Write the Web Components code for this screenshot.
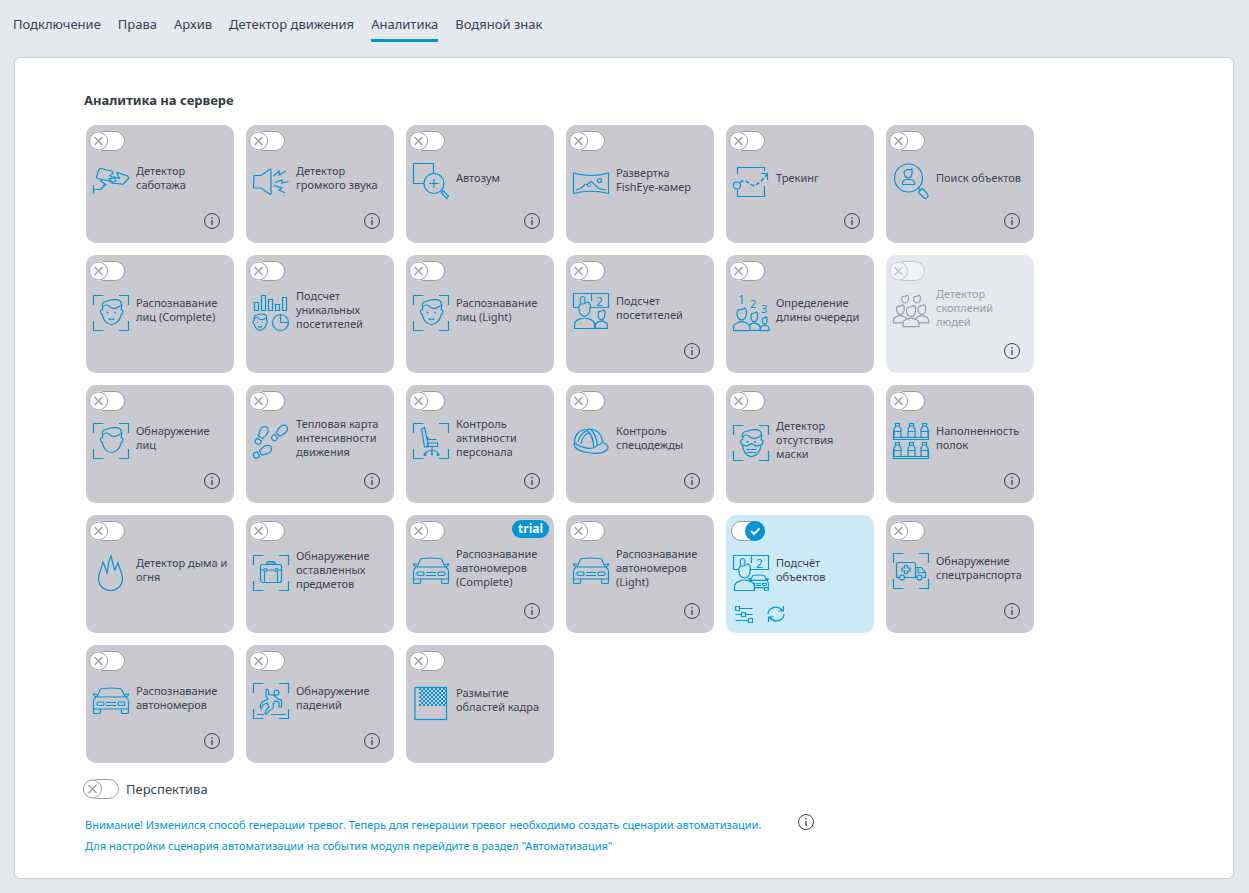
<!DOCTYPE html>
<html lang="ru">
<head>
<meta charset="utf-8">
<title>Аналитика</title>
<style>
  body {
    margin: 0;
    background: #e5e8ed;
    color: #3b4252;
    font-family: "Noto Sans", "Open Sans", sans-serif;
    --blue: #0095d4;
  }
</style>
</head>
<body>
<settings-page>
  <tab-link slot="tabs">Подключение</tab-link>
  <tab-link slot="tabs">Права</tab-link>
  <tab-link slot="tabs">Архив</tab-link>
  <tab-link slot="tabs">Детектор движения</tab-link>
  <tab-link slot="tabs" active>Аналитика</tab-link>
  <tab-link slot="tabs">Водяной знак</tab-link>

  <card-grid heading="Аналитика на сервере">
    <analytics-card icon="tamper" info>Детектор саботажа</analytics-card>
    <analytics-card icon="sound" info>Детектор громкого звука</analytics-card>
    <analytics-card icon="autozoom" info>Автозум</analytics-card>
    <analytics-card icon="fisheye">Развертка FishEye-камер</analytics-card>
    <analytics-card icon="tracking" info>Трекинг</analytics-card>
    <analytics-card icon="search" info>Поиск объектов</analytics-card>

    <analytics-card icon="face">Распознавание лиц (Complete)</analytics-card>
    <analytics-card icon="unique">Подсчет уникальных посетителей</analytics-card>
    <analytics-card icon="face">Распознавание лиц (Light)</analytics-card>
    <analytics-card icon="visitors" info>Подсчет посетителей</analytics-card>
    <analytics-card icon="queue">Определение длины очереди</analytics-card>
    <analytics-card icon="crowd" info disabled>Детектор скоплений людей</analytics-card>

    <analytics-card icon="head" info>Обнаружение лиц</analytics-card>
    <analytics-card icon="steps" info>Тепловая карта интенсивности движения</analytics-card>
    <analytics-card icon="chair" info>Контроль активности персонала</analytics-card>
    <analytics-card icon="helmet" info>Контроль спецодежды</analytics-card>
    <analytics-card icon="mask">Детектор отсутствия маски</analytics-card>
    <analytics-card icon="shelves" info>Наполненность полок</analytics-card>

    <analytics-card icon="fire">Детектор дыма и огня</analytics-card>
    <analytics-card icon="luggage">Обнаружение оставленных предметов</analytics-card>
    <analytics-card icon="car" info badge="trial">Распознавание автономеров (Complete)</analytics-card>
    <analytics-card icon="car" info>Распознавание автономеров (Light)</analytics-card>
    <analytics-card icon="objects" active>Подсчёт объектов</analytics-card>
    <analytics-card icon="ambulance" info>Обнаружение спецтранспорта</analytics-card>

    <analytics-card icon="car" info>Распознавание автономеров</analytics-card>
    <analytics-card icon="fall" info>Обнаружение падений</analytics-card>
    <analytics-card icon="blur">Размытие областей кадра</analytics-card>
  </card-grid>

  <perspective-row>Перспектива</perspective-row>
  <notice-text>
    <span>Внимание! Изменился способ генерации тревог. Теперь для генерации тревог необходимо создать сценарии автоматизации.</span>
    <span slot="second">Для настройки сценария автоматизации на события модуля перейдите в раздел "Автоматизация"</span>
  </notice-text>
</settings-page>

<script>
const frame = '<path d="M.5 10V.5H10.5M26 .5H35.5V10M.5 26V35.5H10.5M26 35.5H35.5V26"/>';
const hair = '<path d="M9.500 15V12.500C8.500 9 10.500 6.500 13.500 6.500C17 4.500 24 4 26.500 5.500C29.500 7.500 29 11 28 15M9.500 12.500C12 9 15 9.500 17 12C20 14.500 26 13.500 28.500 9.500"/>';
const jaw = '<path d="M9.500 15C7 14.500 7 18.500 9.500 20C10 25.500 14.500 29.500 18.500 29.500S27.500 25.500 28 20C30.500 18.500 30.500 14.500 28 15"/>';
const smile = '<path d="M15.500 23.500Q18.500 26 21.500 23.500"/><circle class="solid" cx="14.500" cy="17.500" r="1"/><circle class="solid" cx="22" cy="17.500" r="1"/>';
const carBody = '<path d="M4 14L7 7Q7.500 5.500 10 5.500Q18 4.500 26 5.500Q28.500 5.500 29 7L32 14M4 11.500L.5 11Q.5 13 3 14M32 11.500L35.500 11Q35.500 13 33 14M3 14H33Q35.500 16 35.500 19V26H.5V19Q.5 16 3 14M.5 26V29.500Q.5 30.500 1.500 30.500H6.500Q7.500 30.500 7.500 29.500V26M28.500 26V29.500Q28.500 30.500 29.500 30.500H34.500Q35.500 30.500 35.500 29.500V26M13 19.500H23M13 22.500H23"/><rect x="4" y="19" width="7" height="3.500" rx="1.500"/><rect x="25" y="19" width="7" height="3.500" rx="1.500"/>';
const headPath = 'M4.500 8C3.500 4 5.500 2.500 8 2.500C11 2.500 12 1.500 13.500 .5C15.500 1.500 16.500 4 15.500 8C15.500 11.500 13 14.500 10 14.500S4.500 11.500 4.500 8Z';
const shape = (d, x, y, sx, sy) => `<path class="cut" vector-effect="non-scaling-stroke" transform="translate(${x} ${y}) scale(${sx} ${sy})" d="${d}"/>`;
const person = (x, y, sx, sy) => shape(headPath + 'M0 27V23C0 18.500 4 18 7 17Q10 16 13 17C16 18 20 18.500 20 23V27Z', x, y, sx, sy);
const bottle = (x, y) => `<path d="M${x + 2} ${y}H${x + 6}V${y + 2.5}H${x + 2}ZM${x + 2.5} ${y + 2.5}L${x + .5} ${y + 5.5}V${y + 14}H${x + 7.5}V${y + 5.5}L${x + 5.5} ${y + 2.5}M${x + .5} ${y + 8}H${x + 7.5}"/>`;
const step = (x, y, turn) => `<g transform="translate(${x} ${y}) rotate(${turn})"><path d="M-2.500 5C-3 2 -4 1 -4 -2C-4 -5 -2 -7 0 -7S4 -5 4 -2C4 1 3 2 2.500 5Z"/><path d="M-2.500 7.500H2.500Q4 12.500 0 12.500T-2.500 7.500Z"/></g>`;
const board = '<path d="M.5 .5H35.500V14.500H.5ZM18.500 .5V8"/><text x="6" y="12" font-size="12">0</text><text x="23" y="13" font-size="12">2</text>';
let checker = '';
for (let r = 0; r < 9; r++)
  for (let c = 0; c < 14; c++)
    if ((r + c) % 2 === 0) checker += `M${6 + c * 2} ${3 + r * 2}h2v2h-2z`;

const ICONS = {
  tamper: '<path d="M8 5.500L18.500 8Q20 8.500 20 10.500L17 12.500L20 15L16 16L18.500 18.500L4.500 15.500Q3 15 3.500 13.500L6 6.500Q6.500 5 8 5.500ZM24 9.500L34.500 13Q36 14 35.500 15.500L31 20.500Q30 21.500 28 21L18.500 20L23 18L21 14L26.500 15.500ZM.5 22V31M.5 26.500H6Q9 26.500 10 24L13 21.500L8 18.500V17M13 22H10"/>',
  sound: '<path d="M1 13Q1 12.500 1.500 12.500H8L16.500 6.500Q18 6 18 7V30.500Q18 32 16.500 31L8 25H1.500Q.5 25 .5 24.500ZM20.500 13L26 8V12L33 8M22 19.500L29 17V20L35.500 18.500M20.500 22.500L29 25L26 27L32 30"/>',
  autozoom: '<path d="M11 20.500H.5V.5H20.500V10.500M21 16V25M16.500 20.500H25.500"/><circle cx="21" cy="20.500" r="10"/><path d="M28 27L30 29M28.500 30L30.500 28L35.500 33L33.500 35.500Z"/>',
  fisheye: '<path d="M.5 8Q18 13 35.500 8V28.500Q18 24 .5 28.500ZM3 25C8 24 9 23 11 20.500Q12 18.500 14 19.500L17 17.500Q18.500 15.500 20 18L25 23Q28 24.500 33 25M14 19.500L16 22M18 21L17 20"/><circle cx="26.500" cy="15.500" r="2"/>',
  tracking: '<path d="M4.500 11V4.500H31.500V8M4.500 27V33.500H31.500V23M28 10.500H34.500V17"/><circle cx="4" cy="22.500" r="3.500"/><path class="thick" stroke-dasharray="4 2" d="M7 19.500C11 15.500 15 19 18 21.500S25 22 34.500 11"/>',
  search: '<circle cx="15.500" cy="15" r="14"/><path d="M14 6.500Q18 7 19 6Q20 14 15.500 15Q11 14.500 11 8.500L14 6.500M9.500 21.500V19.500Q10 17 13 16.500H17.500Q21 17 21.500 19.500V21.500ZM25 25L27 27M26 28.500L28.500 26Q29.500 25.500 30.500 26.500L34.500 31Q35.500 32.500 35 33.500L33.500 35Q32 36 31 35L26 30Q25.500 29 26 28.500Z"/>',
  face: frame + hair + jaw + smile,
  head: frame + hair + jaw,
  unique: '<path d="M1.500 7.500H5.500V15.500H1.500ZM8.500 .5H12.500V15.500H8.500ZM15.500 4.500H19.500V15.500H15.500ZM22.500 9.500H26.500V15.500H22.500ZM29.500 2.500H33.500V15.500H29.500ZM27.500 19.500V27.500H35.500"/><circle cx="27.500" cy="27.500" r="8"/><g transform="translate(-5 16) scale(.65)" stroke-width="1.700">' + hair + jaw + smile + '</g>',
  visitors: board + person(22.5, 16.5, .6, .7) + person(1.5, 8.5, 1, 1),
  queue: '<text x="5" y="9" font-size="12">1</text><text x="17" y="13" font-size="11">2</text><text x="28" y="18" font-size="11">3</text>' + person(27.5, 21.5, .42, .52) + person(15.5, 16.5, .58, .7) + person(.5, 12.5, .82, .86),
  crowd: shape(headPath, 6, 2, .6, .55) + shape(headPath, 18, 2, .6, .55) + person(.5, 11.5, .68, .68) + person(22, 11.5, .68, .68) + person(10, 12, .8, .8),
  steps: step(10, 10, 30) + step(28.5, 8, 46) + step(12, 27.5, 62),
  chair: frame + '<path d="M8.500 6L11.500 4.500L15 20V24H11.500ZM13.500 13.500L16 16.500H23.500M15 20H24.500V23.500H14ZM19 23.500V30M11.500 31.500Q13 27.500 19 27.500T25.500 31.500M19 27.500V31"/><circle class="solid" cx="12" cy="31.500" r="1.500"/><circle class="solid" cx="19" cy="31.500" r="1"/><circle class="solid" cx="25" cy="31.500" r="1.500"/>',
  helmet: '<path d="M1.500 20C1.500 12 6 6.500 13.500 6.500C22 5 29 10 29.500 19C36 22 36 25.500 33.500 27C28 33 3 30 1 22Q1 20 1.500 20C6 24 15 26 20 25Q23 24.500 24 22C26 22.500 28 21 29.500 19M14 7.500C19 12 21 18 20.500 25M18 6.500C22 11 24 17 24 22M5 19C6 13 9 10 14 7.500M8 21C9 15 12 11 16 10"/>',
  mask: frame + hair + '<path d="M9.500 15C7 14.500 7 18.500 9.500 20L14 21L18.500 18.500L23 21L28 20C30.500 18.500 30.500 14.500 28 15M9.500 20C10 27 14 31.500 18.500 31.500S27.500 27 28 20M13.500 24.500H23.500M13.500 27.500H23.500"/><circle class="solid" cx="14.500" cy="17" r="1"/><circle class="solid" cx="22" cy="17" r="1"/>',
  shelves: [0, 14, 27].map(x => bottle(x + .5, .5) + bottle(x + .5, 19.5)).join('') + '<path d="M.5 7V16.500H35.500V7M.5 14.500H35.500M.5 26V35.500H35.500V26M.5 33.500H35.500"/>',
  fire: '<path d="M18 1C19 5 20 9 21.500 14Q22 17 23 12L25 7.500C26 12 29 17 29.500 23C29.500 31 24 35.500 17.500 35.500S5.500 31 5.500 23C6 17 9 12 10 7L12 12Q13.500 16 14 18Q15 15 15 13Q15 8 18 1Z"/>',
  luggage: frame + '<rect x="7.500" y="9.500" width="21" height="18" rx="2"/><path d="M13.500 9.500V8H22.500V9.500M15 8V6.500H21V8M7.500 15H11M14.500 15H21.500M25 15H28.500M11.500 17V27.500M24.500 17V27.500"/><circle cx="12.500" cy="15" r="1.500"/><circle cx="23.500" cy="15" r="1.500"/>',
  car: carBody,
  objects: board + '<g transform="translate(15.500 17) scale(.56 .6)" stroke-width="1.900">' + carBody + '</g>' + person(1.5, 8.5, 1, 1),
  ambulance: frame + '<path d="M23.500 24.500H12M6 24.500H3.500V11Q3.500 9.500 5 9.500H21Q22.500 9.500 22.500 11V24.500M22.500 14.500H28.500L32.500 19.500V24.500H30M25 14.500V19.500H32.500M11.500 12.500H14.500V15H17V18H14.500V20.500H11.500V18H9V15H11.500Z"/><circle cx="9" cy="24.500" r="2.500"/><circle cx="26.500" cy="24.500" r="2.500"/>',
  fall: frame + '<circle cx="23.500" cy="9.500" r="2.500"/><path d="M13 7Q15 5 15.500 8L16 12H20.500Q22 13 25 16L28.500 17V24H26V19L22 18L20 22Q22 25 16 28L13 31.500Q11 30 14 26L16 24L14 20L10 22L8 26L7 23L9 19L15 16L13 13ZM4 31.500H11M18 31.500H33"/>',
  blur: `<rect x="2" y="2.500" width="31.500" height="32"/><path class="solid" d="${checker}"/>`
};

const define = (name, css, html) => {
  customElements.define(name, class extends HTMLElement {
    constructor() {
      super();
      this.attachShadow({ mode: 'open' });
    }
    connectedCallback() {
      if (this.shadowRoot.childNodes.length) return;
      const template = document.createElement('template');
      template.innerHTML = `<style>${css}</style>${typeof html === 'function' ? html(this) : html}`;
      this.shadowRoot.append(template.content.cloneNode(true));
    }
  });
};

/* Switch: a native checkbox drawn as a pill, with the thumb laid over it. */
const switchCss = `
  .switch { position: relative; display: block; width: 36px; height: 20px; }
  .switch input { appearance: none; display: block; box-sizing: border-box; width: 34px; height: 20px;
    margin: 0 0 0 2px; border: 1px solid #999da6; border-radius: 10px; background: #fff; }
  .switch svg { position: absolute; left: 0; top: 0; pointer-events: none; }
  .switch .on { display: none; left: auto; right: 0; }
  .switch input:checked ~ .on { display: block; }
  .switch input:checked ~ .off { display: none; }`;
const switchHtml = (attrs = '') => `
  <span class="switch"><input id="sw" type="checkbox" role="switch" ${attrs}>
    <svg class="off" width="20" height="20" viewBox="0 0 20 20" fill="#fff"><circle cx="10" cy="10" r="10"/><circle cx="9.500" cy="10" r="9" stroke="#999da6"/><path d="M5.500 6L13.500 14M13.500 6L5.500 14" stroke="#999da6" stroke-width="1.400"/></svg>
    <svg class="on" width="20" height="20" viewBox="0 0 20 20" fill="none"><circle cx="10" cy="10" r="10" fill="#0095d4"/><path d="M6 10L9 13L14.500 7.500" stroke="#fff" stroke-width="2"/></svg>
  </span>`;

define('info-button', `
  :host { display: block; }
  button { display: block; padding: 0; border: 0; background: none; color: #3b4252; }
  svg { display: block; }`,
  `<button type="button" aria-label="Справка"><svg width="17" height="17" viewBox="0 0 17 17" fill="none" stroke="currentColor"><circle cx="8" cy="8" r="7.500"/><path d="M8 7V12M8 4V5.500" stroke-width="1.300"/></svg></button>`);

define('tab-link', `
  :host { display: block; }
  a { display: block; padding: 15px 0 5px; border-bottom: 3px solid transparent; font-size: 13px; line-height: 19px;
    color: inherit; text-decoration: none; }
  :host([active]) a { border-color: var(--blue); }`,
  '<a href="#"><slot></slot></a>');

define('settings-page', `
  :host { display: block; }
  nav { display: flex; gap: 17px; padding: 0 13px; }
  main { margin: 15px 15px 14px 14px; padding: 32px 69px 22px; border: 1px solid #c9c8ce; border-radius: 6px; background: #fff; }`,
  '<nav><slot name="tabs"></slot></nav><main><slot></slot></main>');

define('card-grid', `
  :host { display: block; }
  h2 { margin: 0 0 15px; font-size: 13px; line-height: 20px; font-weight: 700; color: #333b44; }
  div { display: grid; grid-template-columns: repeat(auto-fill, 148px); gap: 12px; max-width: 960px; padding-left: 2px; }`,
  el => `<h2>${el.getAttribute('heading')}</h2><div><slot></slot></div>`);

define('analytics-card', `
  :host { --card: #cac9cf; position: relative; display: flex; flex-direction: column; box-sizing: border-box;
    min-height: 118px; padding: 6px 6px 13px 3px; border-radius: 10px; background: var(--card); color: #3b4252; }
  :host([active]) { --card: #cbeaf6; }
  :host([disabled]) { --card: #e5e8ed; }
  .body { display: flex; gap: 7px; align-items: center; height: 36px; margin-top: 14px; padding-left: 4px; }
  :host([info]) .body { margin-top: 12px; }
  .icon { flex: none; width: 36px; height: 36px; overflow: visible; fill: none; stroke: var(--blue); stroke-width: 1.200px; }
  .icon text { fill: var(--blue); stroke: none; }
  .cut { fill: var(--card); }
  .solid { fill: var(--blue); stroke: none; }
  .thick { stroke-width: 1.500px; }
  label { font-size: 11px; line-height: 14px; padding-bottom: 6px; }
  footer { display: flex; margin-top: auto; padding: 0 7px 0 6px; }
  footer info-button { margin-left: auto; }
  .tools { display: flex; gap: 14px; margin-bottom: -3px; }
  .tools button { padding: 0; border: 0; background: none; }
  .tools svg { display: block; fill: none; stroke: var(--blue); stroke-width: 1.200px; }
  .badge { position: absolute; top: 5px; right: 5px; padding: 0 6px; border-radius: 9px; background: var(--blue);
    color: #fff; font-size: 12px; line-height: 18px; font-weight: 700; }
  :host([disabled]) .switch { opacity: .5; }
  :host([disabled]) .icon { stroke: #999da6; }
  :host([disabled]) label { color: #999da6; }
  ${switchCss}`,
  el => {
    const on = el.hasAttribute('active');
    return `${switchHtml((on ? 'checked ' : '') + (el.hasAttribute('disabled') ? 'disabled' : ''))}
      ${el.hasAttribute('badge') ? `<span class="badge">${el.getAttribute('badge')}</span>` : ''}
      <div class="body"><svg class="icon" viewBox="0 0 36 36" aria-hidden="true">${ICONS[el.getAttribute('icon')]}</svg><label for="sw"><slot></slot></label></div>
      <footer>
        ${el.hasAttribute('info') ? '<info-button></info-button>' : ''}
        ${on ? `<div class="tools">
          <button type="button" aria-label="Настройки"><svg width="18" height="18" viewBox="0 0 18 18"><path d="M5 3.500H17.500M.5 9.500H6.500M11 9.500H17.500M.5 15.500H13M.5 1.500H4.500V5.500H.5ZM6.500 7.500H10.500V11.500H6.500ZM13.500 13.500H17.500V17.500H13.500Z"/></svg></button>
          <button type="button" aria-label="Обновить"><svg width="18" height="18" viewBox="0 0 18 18"><path d="M1 9C1 3 10 -1 15.500 5.500M16.500 1V6H11.500M17 9C17 15 8 19 2.500 12.500M1.500 17V12H6.500"/></svg></button>
        </div>` : ''}
      </footer>`;
  });

define('perspective-row', `
  :host { display: flex; align-items: center; gap: 7px; margin: 16px 0 0 -1px; }
  label { font-size: 13px; line-height: 20px; }
  ${switchCss}`,
  `${switchHtml()}<label for="sw"><slot></slot></label>`);

define('notice-text', `
  :host { display: flex; align-items: flex-start; gap: 37px; margin: 15px 0 0 1px; color: var(--blue); font-size: 11px; line-height: 21px; }
  p { margin: 0; }
  ::slotted(span) { display: block; }`,
  '<p><slot></slot><slot name="second"></slot></p><info-button></info-button>');
</script>
</body>
</html>
